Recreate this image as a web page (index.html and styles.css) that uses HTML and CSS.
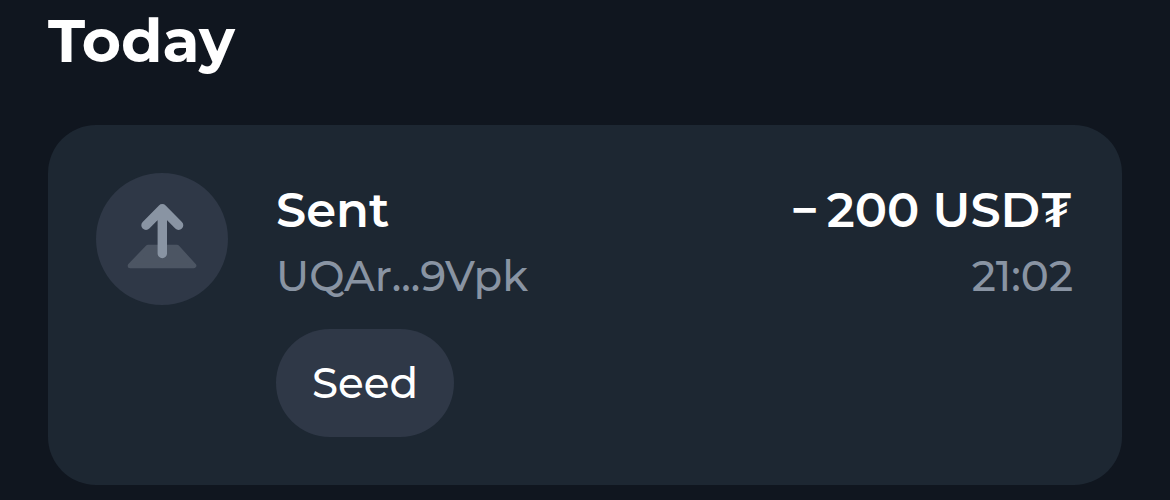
FILE: index.html
```html
<!DOCTYPE html>
<html lang="en">
<head>
<meta charset="utf-8">
<meta name="viewport" content="width=device-width, initial-scale=1">
<title>Activity</title>
<link rel="stylesheet" href="styles.css">
</head>
<body>
<main class="activity">
  <h1 class="day">Today</h1>
  <article class="card">
    <div class="badge">
      <svg class="badge-icon" viewBox="0 0 132 132" aria-hidden="true">
        <path d="M52 74.200h29L97.800 92.700H34.200z" fill="#4c5563" stroke="#4c5563" stroke-width="5" stroke-linejoin="round"/>
        <path d="M66.300 80.500V35.800M50 52.200l16.300-16.400 16.300 16.400" fill="none" stroke="#8994a3" stroke-width="9.400" stroke-linecap="round" stroke-linejoin="round"/>
      </svg>
    </div>
    <div class="details">
      <div class="row title"><h2 class="kind">Sent</h2><span class="amount"><span class="minus">−</span>200 USD₮</span></div>
      <div class="row meta"><span>UQAr...9Vpk</span><time datetime="21:02">21:02</time></div>
      <button class="comment" type="button">Seed</button>
    </div>
  </article>
</main>
</body>
</html>
```
FILE: styles.css
```css
* { box-sizing: border-box; }
body {
  margin: 0;
  background: #10161f;
  color: #fff;
  font-family: Montserrat, Inter, "Open Sans", sans-serif;
}
.activity { padding: 5px 48px 15px; }
.day {
  margin: 0 0 48px;
  font-size: 60px;
  line-height: 72px;
  font-weight: 700;
}
.card {
  display: flex;
  gap: 48px;
  padding: 48px 49px 48px 48px;
  border-radius: 48px;
  background: #1d2732;
}
.badge {
  flex: none;
  width: 132px;
  height: 132px;
  border-radius: 50%;
  background: #2f3847;
}
.badge-icon { display: block; width: 100%; }
.details { flex: 1; padding-top: 7px; }
.row { display: flex; justify-content: space-between; }
.title {
  font-size: 48px;
  line-height: 60px;
  font-weight: 600;
}
.kind { margin: 0; font: inherit; }
.minus { margin-right: 8px; }
.meta {
  margin-top: 8px;
  font-size: 42px;
  line-height: 56px;
  font-weight: 500;
  color: #8994a3;
}
.comment {
  display: block;
  margin-top: 25px;
  padding: 0 36px;
  height: 108px;
  border: 0;
  border-radius: 54px;
  background: #2f3847;
  color: #fff;
  font: 500 42px Montserrat, Inter, "Open Sans", sans-serif;
}
```
